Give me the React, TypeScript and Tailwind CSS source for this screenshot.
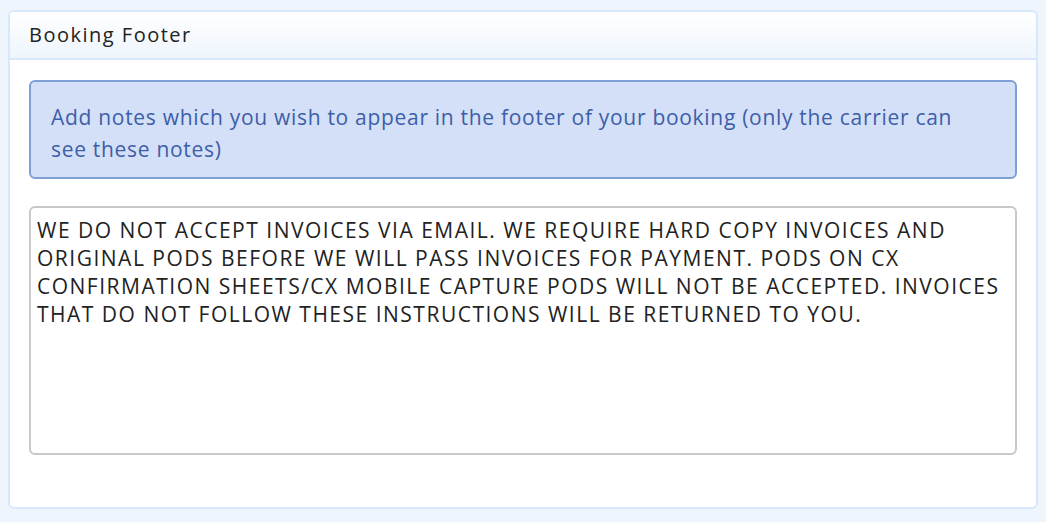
export default function App() {
  return (
    <div className="min-h-[522px] w-[1046px] bg-[#eef5fd] px-[8px] pt-[10px] pb-[12px] font-['Open_Sans',sans-serif]">
      <div className="overflow-hidden rounded-[6px] border-2 border-[#d8e8fa] bg-white">
        <div className="h-[48px] border-b-2 border-[#d8e8fa] bg-gradient-to-b from-white to-[#eef5fd] px-[19px] pt-[11px] text-[20px] leading-[24px] tracking-[1.5px] text-[#222]">
          Booking Footer
        </div>
        <div className="flex flex-col px-[19px] pt-[20px] pb-[52px]">
          <div className="h-[99px] rounded-[6px] border-2 border-[#7f9fd8] bg-[#d4e0f7] pt-[19px] pr-[32px] pl-[20px] text-[21px] leading-[32px] tracking-[0.7px] text-[#3d5ea8]">
            Add notes which you wish to appear in the footer of your booking (only the carrier can see these notes)
          </div>
          <textarea
            className="mt-[27px] h-[249px] resize-none rounded-[6px] border-2 border-[#c8c8c8] pt-[8px] pr-[1px] pl-[6px] text-[21px] leading-[28px] tracking-[1.5px] text-[#222] outline-none"
            defaultValue="WE DO NOT ACCEPT INVOICES VIA EMAIL. WE REQUIRE HARD COPY INVOICES AND ORIGINAL PODS BEFORE WE WILL PASS INVOICES FOR PAYMENT. PODS ON CX CONFIRMATION SHEETS/CX MOBILE CAPTURE PODS WILL NOT BE ACCEPTED. INVOICES THAT DO NOT FOLLOW THESE INSTRUCTIONS WILL BE RETURNED TO YOU."
          />
        </div>
      </div>
    </div>
  )
}
